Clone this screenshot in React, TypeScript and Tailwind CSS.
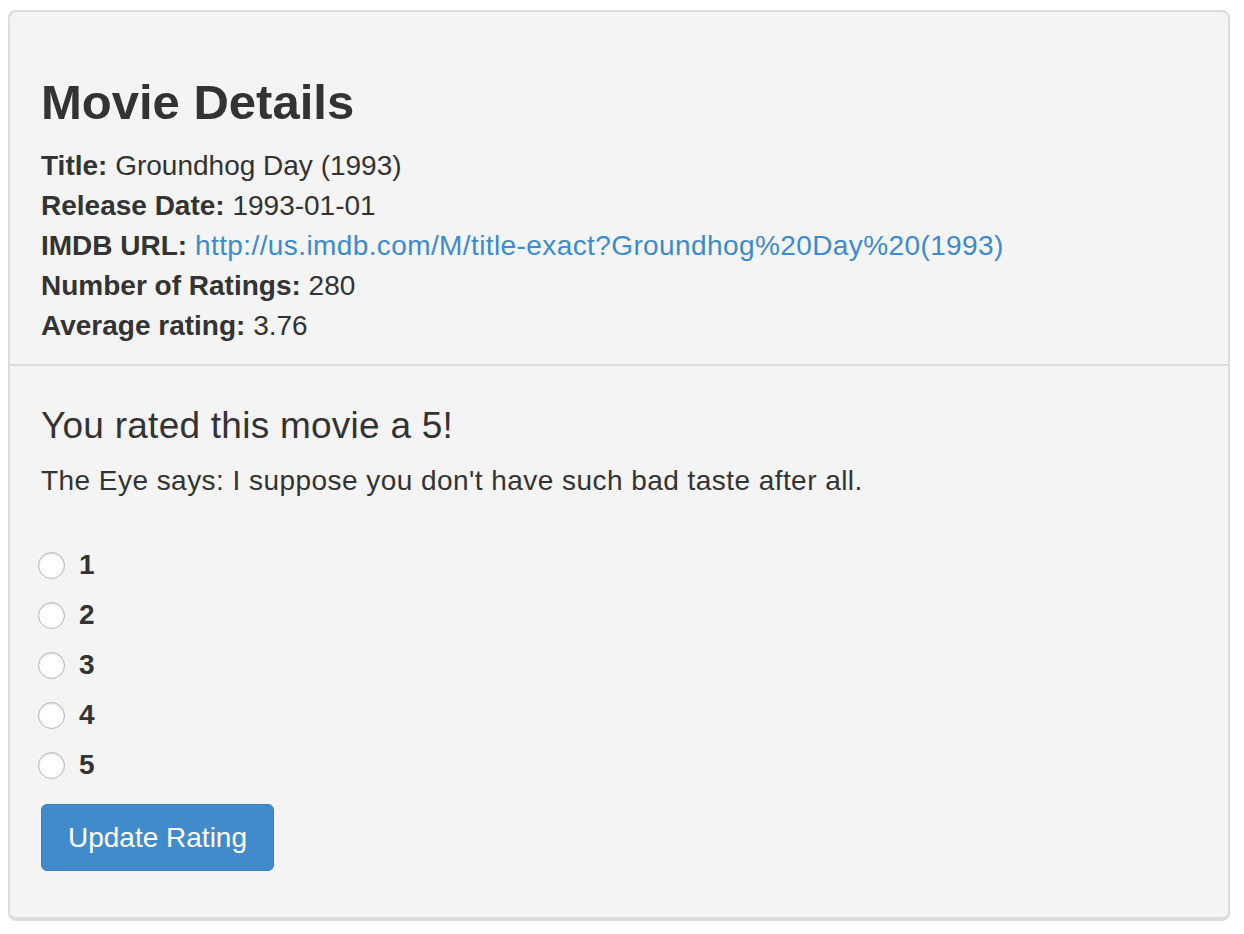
export default function App() {
  const ratings = [1, 2, 3, 4, 5]

  return (
    <div className="min-h-screen bg-white pt-[10px] pl-[8px] pr-[14px] text-[#333333]" style={{ fontFamily: '"Liberation Sans", Arial, sans-serif' }}>
      <div className="w-[1222px] h-[911px] rounded-[8px] border-2 border-b-[4px] border-[#dcdcdc] bg-[#f4f4f4]">
        <div className="px-[31px] pt-[60px] pb-[18px]">
          <h1 className="text-[49px] font-bold leading-[60px] mb-[14px]">Movie Details</h1>
          <div className="text-[28px] leading-[40px]">
            <div><span className="font-bold">Title:</span> Groundhog Day (1993)</div>
            <div><span className="font-bold">Release Date:</span> 1993-01-01</div>
            <div>
              <span className="font-bold">IMDB URL:</span>{' '}
              <a href="#" className="text-[#3d8bcd] tracking-[0.4px]">http://us.imdb.com/M/title-exact?Groundhog%20Day%20(1993)</a>
            </div>
            <div><span className="font-bold">Number of Ratings:</span> 280</div>
            <div><span className="font-bold">Average rating:</span> 3.76</div>
          </div>
        </div>
        <div className="border-t-2 border-[#dcdcdc] px-[31px] pt-[38px]">
          <h2 className="text-[37px] leading-[44px] tracking-[0.25px]">You rated this movie a 5!</h2>
          <p className="text-[28px] leading-[40px] mt-[13px] tracking-[0.45px]">The Eye says: I suppose you don't have such bad taste after all.</p>
          <form className="mt-[39px]">
            <div className="flex flex-col">
              {ratings.map((r) => (
                <label key={r} className="flex items-center h-[50px] -ml-[3px]">
                  <span className="w-[27px] h-[27px] rounded-full border border-[#b5b5b5] bg-white shadow-[inset_0_1px_2px_rgba(0,0,0,0.15)]" />
                  <span className="ml-[14px] text-[28px] font-bold">{r}</span>
                </label>
              ))}
            </div>
            <button type="button" className="mt-[14px] w-[233px] h-[67px] rounded-[6px] border border-[#3a7ebb] bg-[#428bca] text-white text-[28px]">
              Update Rating
            </button>
          </form>
        </div>
      </div>
    </div>
  )
}
